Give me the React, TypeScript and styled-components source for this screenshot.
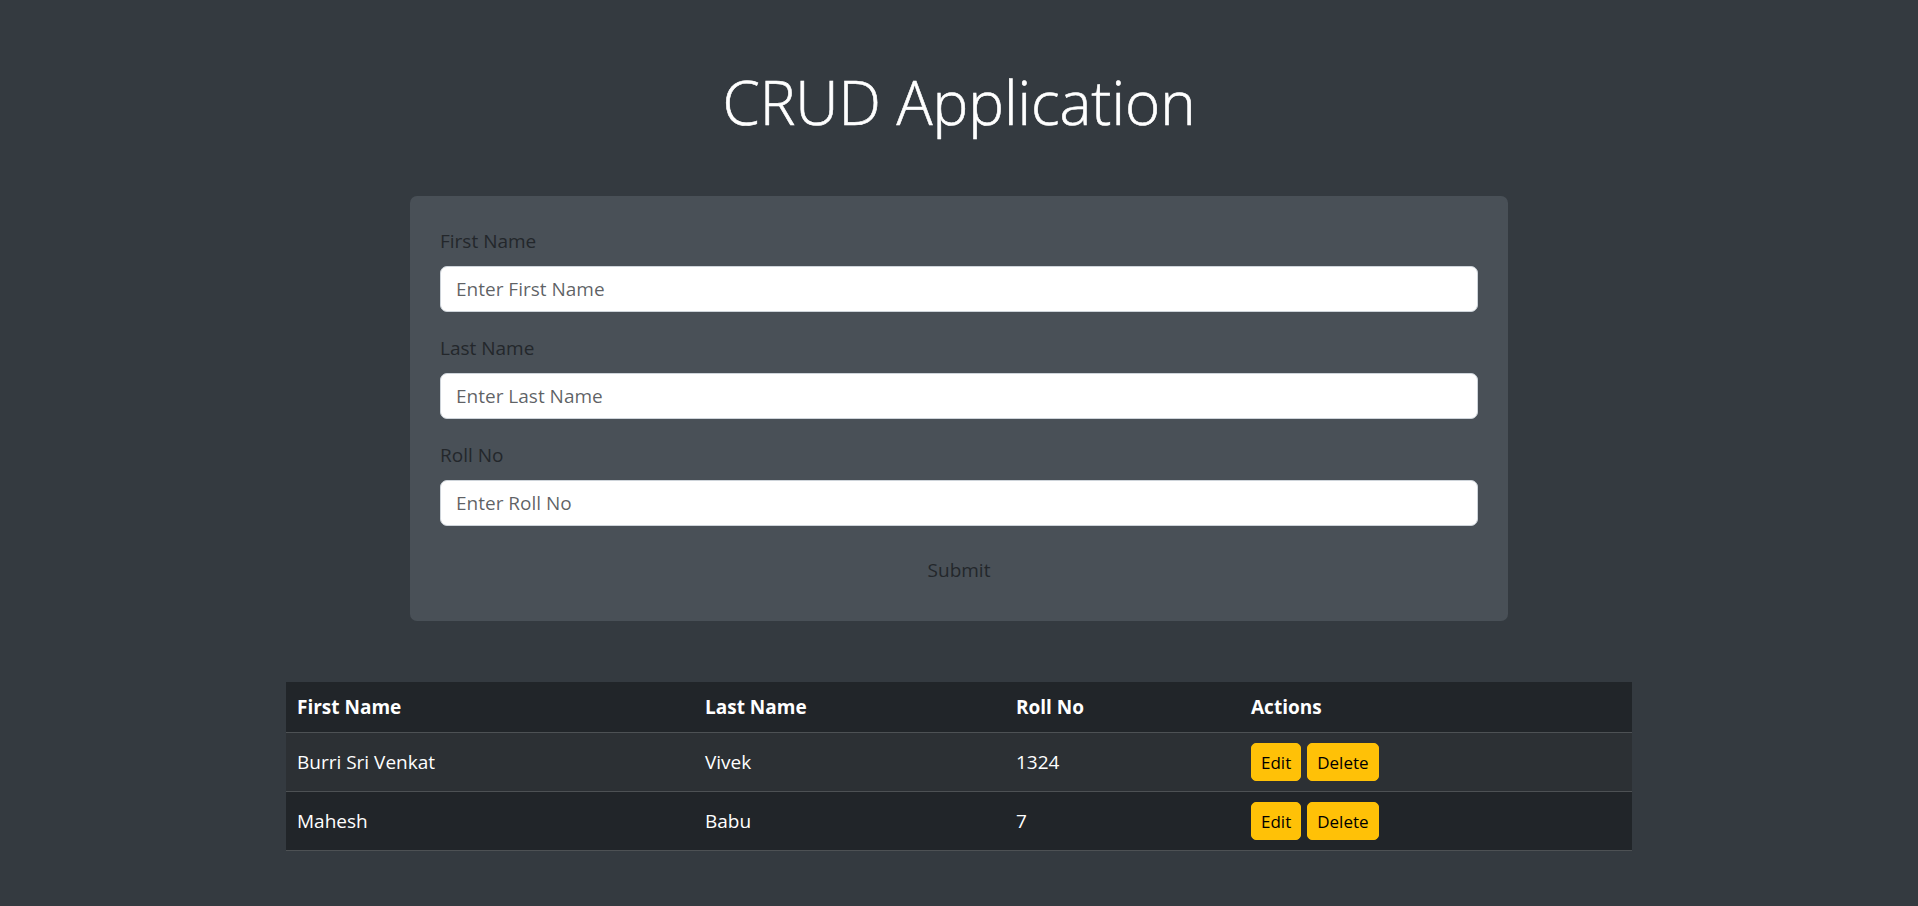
import React from "react";
import styled, { createGlobalStyle } from "styled-components";

const GlobalStyle = createGlobalStyle`
  html, body {
    margin: 0;
    padding: 0;
    background: #343a40;
  }
  body {
    font-family: "Open Sans", "Noto Sans", sans-serif;
    color: #212529;
    min-height: 906px;
  }
  * { box-sizing: border-box; }
`;

const Page = styled.div`
  display: flex;
  flex-direction: column;
  align-items: center;
  padding-top: 66px;
  padding-bottom: 40px;
`;

const Title = styled.h1`
  margin: 0 0 58px;
  font-size: 60px;
  font-weight: 300;
  line-height: 72px;
  color: #ffffff;
  text-align: center;
  -webkit-text-stroke: 0.6px #ffffff;
`;

const Card = styled.form`
  width: 1098px;
  background: #495057;
  border-radius: 7px;
  padding: 30px 30px 29px;
  display: flex;
  flex-direction: column;
  gap: 21px;
`;

const Group = styled.div`
  display: flex;
  flex-direction: column;
`;

const Label = styled.label`
  font-size: 19px;
  line-height: 30px;
  margin-bottom: 10px;
  color: #23272b;
`;

const Input = styled.input`
  height: 46px;
  width: 100%;
  border: 1px solid #ced4da;
  border-radius: 7px;
  background: #fff;
  padding: 0 15px;
  font-family: inherit;
  font-size: 19px;
  color: #212529;
  outline: none;
  &::placeholder {
    color: rgba(33, 37, 41, 0.72);
  }
`;

const SubmitButton = styled.button`
  align-self: center;
  margin-top: 1px;
  background: transparent;
  border: none;
  font-family: inherit;
  font-size: 19px;
  line-height: 30px;
  padding: 7px 15px;
  color: #23272b;
  cursor: pointer;
`;

const Table = styled.table`
  margin-top: 61px;
  width: 1346px;
  table-layout: fixed;
  border-collapse: collapse;
  color: #fff;
  font-size: 19px;
`;

const HeadCell = styled.th<{ $w: number }>`
  width: ${(p) => p.$w}px;
  text-align: left;
  font-weight: 700;
  padding: 10px 10px 10px 11px;
  line-height: 30px;
  background: #212529;
  border-bottom: 1px solid #4d5154;
`;

const Row = styled.tr<{ $striped: boolean }>`
  background: ${(p) => (p.$striped ? "#2c3034" : "#212529")};
  border-bottom: 1px solid #4d5154;
`;

const Cell = styled.td`
  padding: 10px 10px 10px 11px;
  line-height: 38px;
  vertical-align: middle;
`;

const Actions = styled.div`
  display: flex;
  gap: 6px;
`;

const SmallButton = styled.button`
  background: #ffc107;
  border: 1px solid #ffc107;
  border-radius: 5px;
  height: 38px;
  padding: 0 9px;
  font-family: inherit;
  font-size: 17px;
  color: #000;
  cursor: pointer;
`;

const rows = [
  { first: "Burri Sri Venkat", last: "Vivek", roll: "1324" },
  { first: "Mahesh", last: "Babu", roll: "7" },
];

export default function App() {
  return (
    <>
      <GlobalStyle />
      <Page>
        <Title>CRUD Application</Title>
        <Card onSubmit={(e) => e.preventDefault()}>
          <Group>
            <Label>First Name</Label>
            <Input placeholder="Enter First Name" />
          </Group>
          <Group>
            <Label>Last Name</Label>
            <Input placeholder="Enter Last Name" />
          </Group>
          <Group>
            <Label>Roll No</Label>
            <Input placeholder="Enter Roll No" />
          </Group>
          <SubmitButton type="submit">Submit</SubmitButton>
        </Card>
        <Table>
          <thead>
            <tr>
              <HeadCell $w={408}>First Name</HeadCell>
              <HeadCell $w={311}>Last Name</HeadCell>
              <HeadCell $w={235}>Roll No</HeadCell>
              <HeadCell $w={392}>Actions</HeadCell>
            </tr>
          </thead>
          <tbody>
            {rows.map((r, i) => (
              <Row key={i} $striped={i % 2 === 0}>
                <Cell>{r.first}</Cell>
                <Cell>{r.last}</Cell>
                <Cell>{r.roll}</Cell>
                <Cell>
                  <Actions>
                    <SmallButton>Edit</SmallButton>
                    <SmallButton>Delete</SmallButton>
                  </Actions>
                </Cell>
              </Row>
            ))}
          </tbody>
        </Table>
      </Page>
    </>
  );
}
